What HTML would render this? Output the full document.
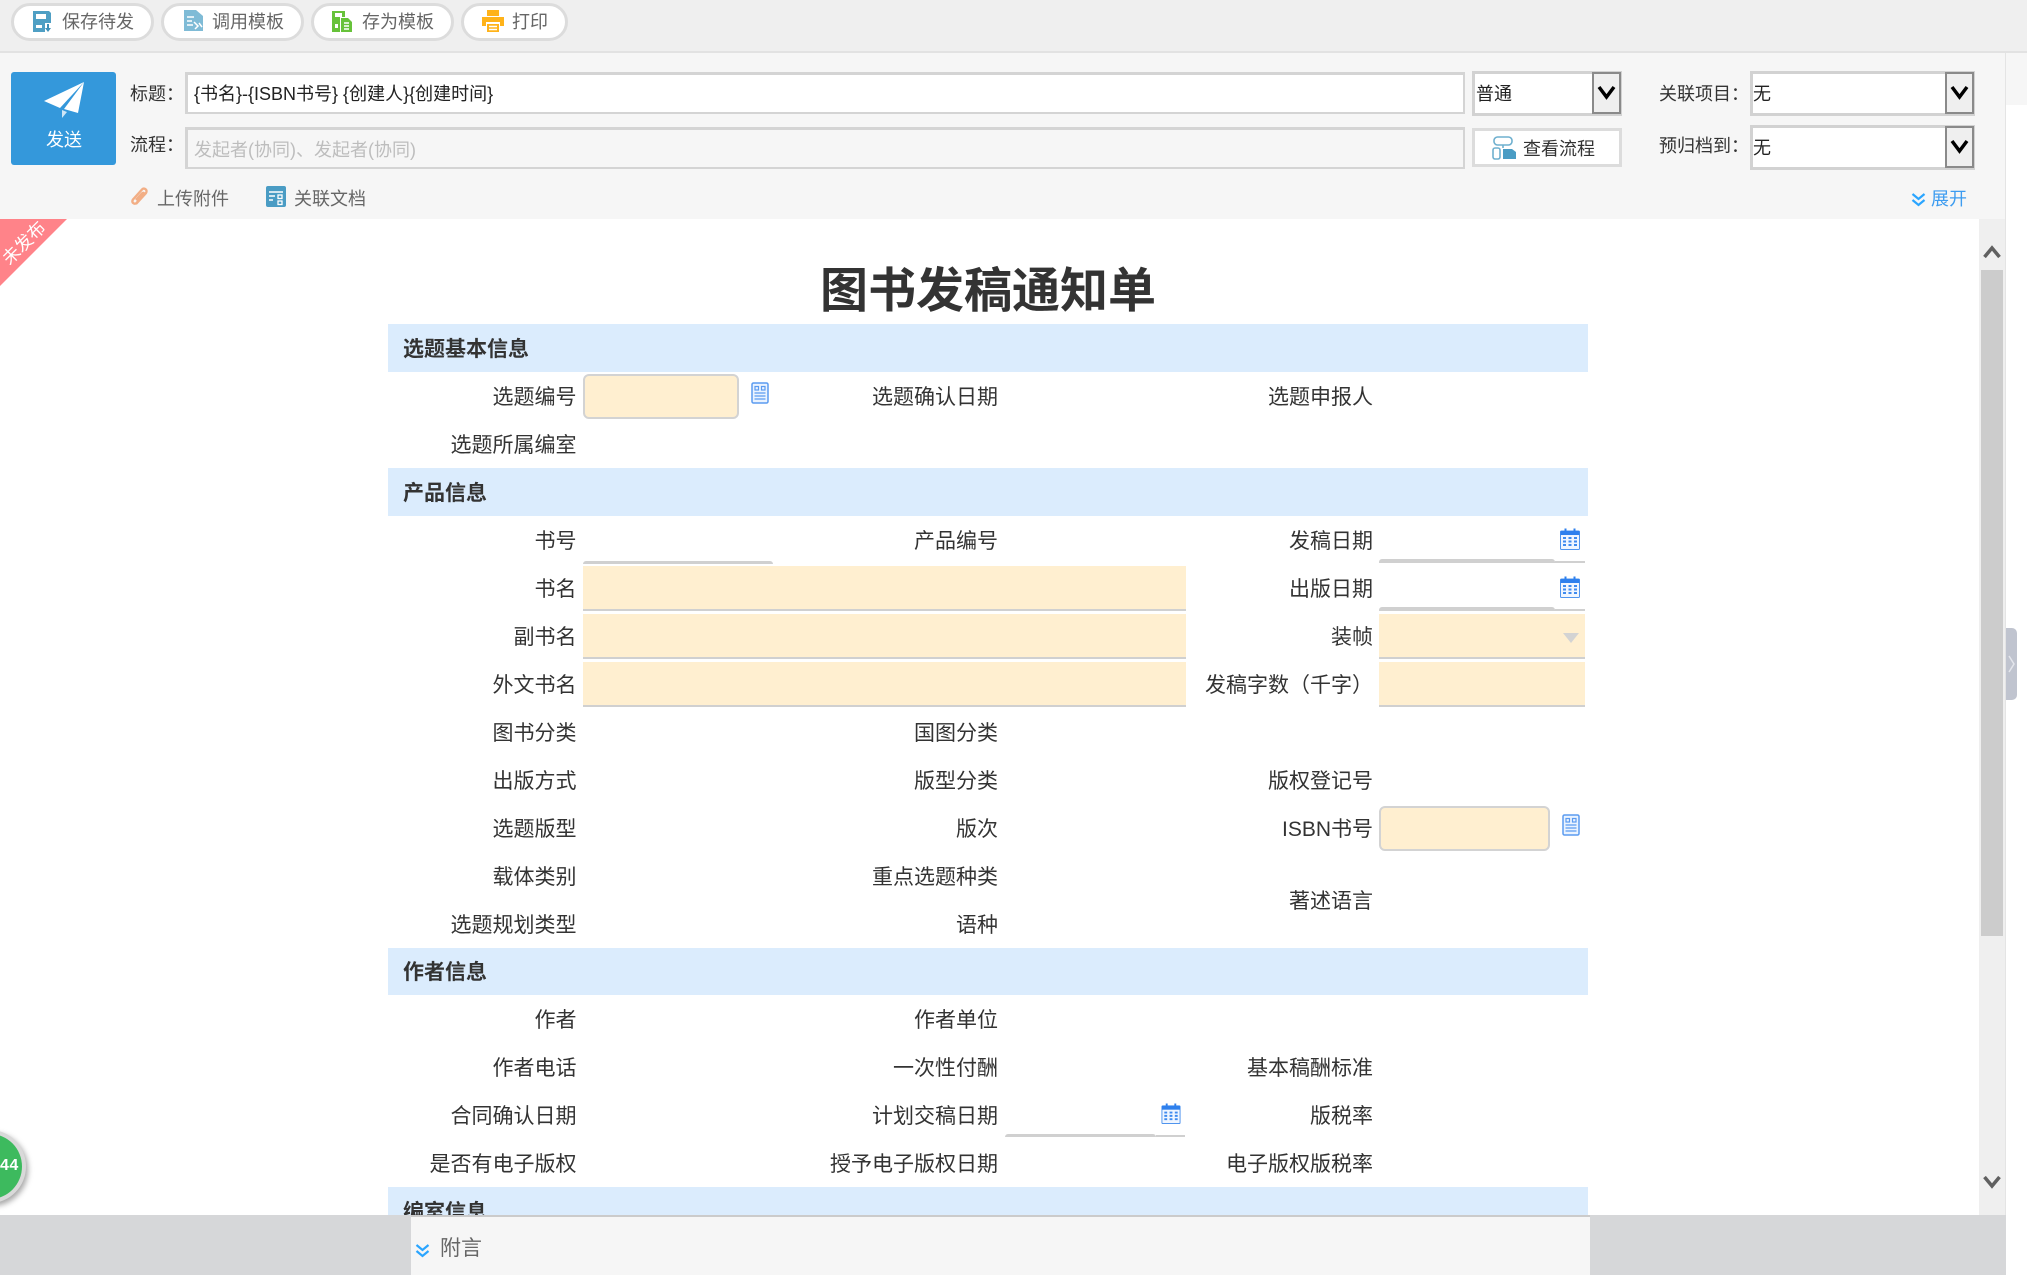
<!DOCTYPE html>
<html lang="zh-CN"><head><meta charset="utf-8"><title>图书发稿通知单</title>
<style>
html,body{margin:0;padding:0;width:2027px;height:1280px;overflow:hidden;background:#fff}
body{position:relative;font-family:"Liberation Sans","Noto Sans CJK SC",sans-serif;color:#333}
div,span,svg{position:absolute;box-sizing:border-box}
.tb{top:3px;height:38px;background:#fff;border:3px solid #dcdcdc;border-radius:19px}
.tt{top:8px;font-size:18px;line-height:28px;color:#666;white-space:nowrap}
.h{font-size:18px;line-height:24px;color:#333;white-space:nowrap}
.inp{background:#fff;border:2px solid #d4d4d4;border-top-width:3px;border-left-width:3px}
.sel{background:#fff;border:3px solid #d2d2d2}
.arr{top:-2px;bottom:-1px;right:-2px;width:29px;background:#efefef;border:2px solid #8a8a8a}
.l{height:48px;line-height:52px;font-size:21px;color:#333;white-space:nowrap;text-align:right}
.c1{right:1450.500px}.c2{right:1029px}.c3{right:654px}
.sec{left:388px;width:1200px;height:48px;background:#dbecfd;font-size:21px;font-weight:bold;line-height:52px;padding-left:15px;color:#333;overflow:hidden}
.fld{background:#ffefd0;border-bottom:2px solid #d0d0d0}
.rnd{background:#ffefd0;border:2px solid #d3d3d3;border-radius:6px}
.ul1{height:3px;background:#d0d0d0;border-radius:3px 3px 0 0}
.ul2{height:2px;background:#d0d0d0}
</style></head><body>

<!-- toolbar -->
<div style="left:0;top:0;width:2027px;height:51px;background:#efefef"></div>
<div style="left:0;top:51px;width:2027px;height:2px;background:#e2e2e2"></div>
<div class="tb" style="left:11px;width:143px"></div>
<div class="tb" style="left:161px;width:143px"></div>
<div class="tb" style="left:311px;width:143px"></div>
<div class="tb" style="left:461px;width:107px"></div>

<svg style="left:33px;top:11px" width="18" height="21" viewBox="0 0 18 21"><path d="M0 0H16L18 2V12H12V21H0Z" fill="#4f9fc4"/><rect x="3" y="3" width="10" height="5" fill="#fff"/><rect x="3" y="14" width="6" height="3" fill="#fff"/><path d="M14 13V17H12L15 21L18 17H16V13Z" fill="#3e8fb8"/></svg>
<span class="tt" style="left:62px">保存待发</span>
<svg style="left:184px;top:10px" width="19" height="21" viewBox="0 0 19 21"><path d="M0 0H12L19 6V21H0Z" fill="#7fbbd6"/><path d="M3 7H10M3 11H8M3 15H9" stroke="#fff" stroke-width="1.6"/><path d="M10 12L14 16L11 19M15 13L18 17" stroke="#fff" stroke-width="1.5" fill="none"/></svg>
<span class="tt" style="left:212px">调用模板</span>
<svg style="left:332px;top:10px" width="20" height="22" viewBox="0 0 20 22"><path d="M0 1H13V7H8V22H0Z" fill="#67c23a"/><rect x="3" y="3" width="7" height="4" fill="#fff"/><rect x="3" y="14" width="3" height="4" fill="#fff"/><path d="M9 8H16L20 12V22H9Z" fill="#67c23a"/><path d="M12 13H17M12 16H17M12 19H17" stroke="#fff" stroke-width="1.4"/></svg>
<span class="tt" style="left:362px">存为模板</span>
<svg style="left:482px;top:10px" width="22" height="22" viewBox="0 0 22 22"><rect x="5" y="0" width="12" height="6" fill="#ffb31a"/><path d="M0 7H22V16H18V12H4V16H0Z" fill="#ffb31a"/><path d="M5 14H17V22H5Z" fill="#ffb31a"/><path d="M7 16.500H15M7 19.500H15" stroke="#fff" stroke-width="1.5"/></svg>
<span class="tt" style="left:512px">打印</span>

<!-- header -->
<div style="left:0;top:53px;width:2005px;height:166px;background:#f6f6f6"></div>
<div style="left:2006px;top:53px;width:21px;height:52px;background:#f6f6f6"></div>
<div style="left:2005px;top:53px;width:1px;height:1162px;background:#e4e4e4"></div>

<div style="left:11px;top:72px;width:105px;height:93px;background:#3498db;border-radius:3px"></div>
<svg style="left:44px;top:82px" width="40" height="36" viewBox="0 0 40 36"><path d="M40 0L0 19L16 26Z" fill="#fff"/><path d="M40 0L20 27L34 31Z" fill="#fff"/><path d="M18 28L23 30L18 36Z" fill="#cfe6f6"/></svg>
<span style="left:46px;top:128px;font-size:18px;line-height:24px;color:#fff">发送</span>

<span class="h" style="left:130px;top:82px">标题：</span>
<span class="h" style="left:130px;top:133px">流程：</span>
<div class="inp" style="left:185px;top:72px;width:1280px;height:42px"></div>
<span style="left:194px;top:82px;font-size:18px;line-height:24px;color:#222;white-space:nowrap">{书名}-{ISBN书号} {创建人}{创建时间}</span>
<div class="inp" style="left:185px;top:127px;width:1280px;height:42px;background:#f6f6f6"></div>
<span style="left:194px;top:138px;font-size:18px;line-height:24px;color:#bdbdbd;white-space:nowrap">发起者(协同)、发起者(协同)</span>

<div class="sel" style="left:1472px;top:71px;width:150px;height:45px"><div class="arr"><svg style="left:3px;top:9px" width="19" height="18" viewBox="0 0 19 18"><path d="M2 4L9.500 14L17 4" fill="none" stroke="#000" stroke-width="3.500"/></svg></div></div>
<span style="left:1476px;top:82px;font-size:18px;line-height:24px;color:#222">普通</span>
<div style="left:1472px;top:128px;width:150px;height:39px;background:#fff;border:3px solid #dcdcdc"></div>
<svg style="left:1492px;top:136px" width="24" height="24" viewBox="0 0 24 24"><rect x="2" y="1" width="18" height="8" rx="3.500" fill="none" stroke="#6fb0cf" stroke-width="1.600"/><path d="M11 9V12" stroke="#6fb0cf" stroke-width="1.600"/><rect x="1" y="12" width="7" height="11" rx="2" fill="none" stroke="#6fb0cf" stroke-width="1.600"/><path d="M11 13H20L24 16V23H11Z" fill="#4a9cc4"/></svg>
<span style="left:1523px;top:137px;font-size:18px;line-height:24px;color:#333">查看流程</span>

<span class="h" style="left:1659px;top:82px">关联项目：</span>
<span class="h" style="left:1659px;top:134px">预归档到：</span>
<div class="sel" style="left:1750px;top:71px;width:225px;height:45px"><div class="arr"><svg style="left:3px;top:9px" width="19" height="18" viewBox="0 0 19 18"><path d="M2 4L9.500 14L17 4" fill="none" stroke="#000" stroke-width="3.500"/></svg></div></div>
<span style="left:1753px;top:82px;font-size:18px;line-height:24px;color:#222">无</span>
<div class="sel" style="left:1750px;top:125px;width:225px;height:45px"><div class="arr"><svg style="left:3px;top:9px" width="19" height="18" viewBox="0 0 19 18"><path d="M2 4L9.500 14L17 4" fill="none" stroke="#000" stroke-width="3.500"/></svg></div></div>
<span style="left:1753px;top:136px;font-size:18px;line-height:24px;color:#222">无</span>

<svg style="left:130px;top:187px" width="20" height="20" viewBox="0 0 20 20"><path d="M6 17L16 6C18 3 14 0 12 2.500L3 12.500C1 15 4 18 6.500 16L14 8C15 6.500 13.500 5 12 6.500L6 13" fill="none" stroke="#f2ae85" stroke-width="2.400"/></svg>
<span class="h" style="left:157px;top:187px;color:#666">上传附件</span>
<svg style="left:266px;top:186px" width="20" height="21" viewBox="0 0 20 21"><rect x="0" y="0" width="20" height="21" rx="2" fill="#4a9cc4"/><path d="M3 6H17M3 10H9M3 14H7" stroke="#fff" stroke-width="1.600"/><rect x="12" y="9" width="4" height="3.500" fill="none" stroke="#fff" stroke-width="1.300"/><rect x="12" y="15" width="4" height="3.500" fill="none" stroke="#fff" stroke-width="1.300"/></svg>
<span class="h" style="left:294px;top:187px;color:#666">关联文档</span>
<svg style="left:1911px;top:192px" width="15" height="15" viewBox="0 0 15 15"><path d="M1.500 2L7.500 7L13.500 2M1.500 8L7.500 13L13.500 8" fill="none" stroke="#2aa5ff" stroke-width="2.200"/></svg>
<span style="left:1931px;top:187px;font-size:18px;line-height:24px;color:#3d9cf0">展开</span>

<!-- ribbon -->
<svg style="left:0;top:219px" width="68" height="68" viewBox="0 0 68 68"><path d="M0 0H67L0 67Z" fill="#ff8389"/></svg>
<span style="left:-6px;top:231px;width:60px;text-align:center;font-size:17.500px;line-height:24px;color:#fff;transform:rotate(-45deg)">未发布</span>

<!-- scrollbar -->
<div style="left:1979px;top:219px;width:26px;height:996px;background:#efefef"></div>
<div style="left:1981px;top:270px;width:22px;height:666px;background:#ccc"></div>
<svg style="left:1983px;top:244px" width="18" height="16" viewBox="0 0 18 16"><path d="M1.500 13L9 4L16.500 13" fill="none" stroke="#606060" stroke-width="3.500"/></svg>
<svg style="left:1983px;top:1174px" width="18" height="16" viewBox="0 0 18 16"><path d="M1.500 3L9 12L16.500 3" fill="none" stroke="#606060" stroke-width="3.500"/></svg>
<div style="left:2006px;top:628px;width:11px;height:72px;background:#c0c4cf;border-radius:0 5px 5px 0"></div>
<svg style="left:2006px;top:654px" width="11" height="20" viewBox="0 0 11 20"><path d="M3 2L8 10L3 18" fill="none" stroke="#e4e6ec" stroke-width="1.500"/></svg>

<!-- title -->
<div style="left:388px;top:261px;width:1200px;height:62px;line-height:62px;text-align:center;font-size:48px;font-weight:bold;color:#333">图书发稿通知单</div>

<!-- section 1 -->
<div class="sec" style="top:324px">选题基本信息</div>
<div class="l c1" style="top:372px">选题编号</div>
<div class="rnd" style="left:583px;top:374px;width:156px;height:45px"></div>
<svg style="left:751px;top:382px" width="18" height="22" viewBox="0 0 18 22"><rect x="1" y="1" width="16" height="20" rx="1.500" fill="#eaf3ff" stroke="#5b9bf0" stroke-width="1.500"/><rect x="4" y="4.500" width="3.500" height="3.500" fill="none" stroke="#5b9bf0" stroke-width="1.200"/><rect x="10.500" y="4.500" width="3.500" height="3.500" fill="none" stroke="#5b9bf0" stroke-width="1.200"/><path d="M3.500 11H14.500M3.500 14H14.500M3.500 17H14.500" stroke="#5b9bf0" stroke-width="1.200"/></svg>
<div class="l c2" style="top:372px">选题确认日期</div>
<div class="l c3" style="top:372px">选题申报人</div>
<div class="l c1" style="top:420px">选题所属编室</div>

<!-- section 2 -->
<div class="sec" style="top:468px">产品信息</div>
<div class="l c1" style="top:516px">书号</div>
<div class="ul1" style="left:583px;top:561px;width:190px"></div>
<div class="l c2" style="top:516px">产品编号</div>
<div class="l c3" style="top:516px">发稿日期</div>
<div class="ul1" style="left:1379px;top:559px;width:176px;height:4px"></div>
<div class="ul2" style="left:1555px;top:561px;width:30px"></div>
<svg style="left:1560px;top:528px" width="20" height="22" viewBox="0 0 20 22"><rect x="0.500" y="3" width="19" height="18.500" rx="1" fill="#f0f6ff" stroke="#4f94ee"/><rect x="0.500" y="3" width="19" height="4" fill="#2f80ed"/><path d="M5.500 0.500V5M14.500 0.500V5" stroke="#2f80ed" stroke-width="2"/><path d="M3 10H17M3 13.500H17M3 17H17" stroke="#3f8bef" stroke-width="2" stroke-dasharray="3 2.500"/></svg>

<div class="l c1" style="top:564px">书名</div>
<div class="fld" style="left:583px;top:566px;width:603px;height:45px"></div>
<div class="l c3" style="top:564px">出版日期</div>
<div class="ul1" style="left:1379px;top:607px;width:176px;height:4px"></div>
<div class="ul2" style="left:1555px;top:609px;width:30px"></div>
<svg style="left:1560px;top:576px" width="20" height="22" viewBox="0 0 20 22"><rect x="0.500" y="3" width="19" height="18.500" rx="1" fill="#f0f6ff" stroke="#4f94ee"/><rect x="0.500" y="3" width="19" height="4" fill="#2f80ed"/><path d="M5.500 0.500V5M14.500 0.500V5" stroke="#2f80ed" stroke-width="2"/><path d="M3 10H17M3 13.500H17M3 17H17" stroke="#3f8bef" stroke-width="2" stroke-dasharray="3 2.500"/></svg>

<div class="l c1" style="top:612px">副书名</div>
<div class="fld" style="left:583px;top:614px;width:603px;height:45px"></div>
<div class="l c3" style="top:612px">装帧</div>
<div class="fld" style="left:1379px;top:614px;width:206px;height:45px"></div>
<svg style="left:1563px;top:633px" width="16" height="10" viewBox="0 0 16 10"><path d="M0 0H16L8 10Z" fill="#d3d3d3"/></svg>

<div class="l c1" style="top:660px">外文书名</div>
<div class="fld" style="left:583px;top:662px;width:603px;height:45px"></div>
<div class="l c3" style="top:660px">发稿字数（千字）</div>
<div class="fld" style="left:1379px;top:662px;width:206px;height:45px"></div>

<div class="l c1" style="top:708px">图书分类</div>
<div class="l c2" style="top:708px">国图分类</div>
<div class="l c1" style="top:756px">出版方式</div>
<div class="l c2" style="top:756px">版型分类</div>
<div class="l c3" style="top:756px">版权登记号</div>
<div class="l c1" style="top:804px">选题版型</div>
<div class="l c2" style="top:804px">版次</div>
<div class="l c3" style="top:804px">ISBN书号</div>
<div class="rnd" style="left:1379px;top:806px;width:171px;height:45px"></div>
<svg style="left:1562px;top:814px" width="18" height="22" viewBox="0 0 18 22"><rect x="1" y="1" width="16" height="20" rx="1.500" fill="#eaf3ff" stroke="#5b9bf0" stroke-width="1.500"/><rect x="4" y="4.500" width="3.500" height="3.500" fill="none" stroke="#5b9bf0" stroke-width="1.200"/><rect x="10.500" y="4.500" width="3.500" height="3.500" fill="none" stroke="#5b9bf0" stroke-width="1.200"/><path d="M3.500 11H14.500M3.500 14H14.500M3.500 17H14.500" stroke="#5b9bf0" stroke-width="1.200"/></svg>
<div class="l c1" style="top:852px">载体类别</div>
<div class="l c2" style="top:852px">重点选题种类</div>
<div class="l c3" style="top:876px">著述语言</div>
<div class="l c1" style="top:900px">选题规划类型</div>
<div class="l c2" style="top:900px">语种</div>

<!-- section 3 -->
<div class="sec" style="top:948px;height:47px;line-height:50px">作者信息</div>
<div class="l c1" style="top:995px">作者</div>
<div class="l c2" style="top:995px">作者单位</div>
<div class="l c1" style="top:1043px">作者电话</div>
<div class="l c2" style="top:1043px">一次性付酬</div>
<div class="l c3" style="top:1043px">基本稿酬标准</div>
<div class="l c1" style="top:1091px">合同确认日期</div>
<div class="l c2" style="top:1091px">计划交稿日期</div>
<div class="ul1" style="left:1005px;top:1134px;width:151px;height:3px"></div>
<div class="ul2" style="left:1156px;top:1135px;width:29px"></div>
<svg style="left:1161px;top:1103px" width="20" height="21" viewBox="0 0 20 22"><rect x="0.500" y="3" width="19" height="18.500" rx="1" fill="#f0f6ff" stroke="#4f94ee"/><rect x="0.500" y="3" width="19" height="4" fill="#2f80ed"/><path d="M5.500 0.500V5M14.500 0.500V5" stroke="#2f80ed" stroke-width="2"/><path d="M3 10H17M3 13.500H17M3 17H17" stroke="#3f8bef" stroke-width="2" stroke-dasharray="3 2.500"/></svg>
<div class="l c3" style="top:1091px">版税率</div>
<div class="l c1" style="top:1139px">是否有电子版权</div>
<div class="l c2" style="top:1139px">授予电子版权日期</div>
<div class="l c3" style="top:1139px">电子版权版税率</div>

<!-- section 4 -->
<div class="sec" style="top:1187px">编室信息</div>

<!-- badge -->
<div style="left:-46px;top:1130px;width:72px;height:73px;border-radius:50%;background:#3dba5e;border:4px solid #d9d9d9;box-shadow:2px 3px 6px rgba(0,0,0,.35)"></div>
<span style="left:0;top:1156px;font-size:16px;line-height:20px;font-weight:bold;color:#fff;letter-spacing:.5px">44</span>

<!-- bottom -->
<div style="left:0;top:1215px;width:2006px;height:60px;background:#d6d7d9"></div>
<div style="left:411px;top:1215px;width:1179px;height:2px;background:#cbcbcb"></div>
<div style="left:411px;top:1217px;width:1179px;height:58px;background:#f6f6f6"></div>
<svg style="left:415px;top:1243px" width="15" height="15" viewBox="0 0 15 15"><path d="M1.500 2L7.500 7L13.500 2M1.500 8L7.500 13L13.500 8" fill="none" stroke="#2aa5ff" stroke-width="2.200"/></svg>
<span style="left:440px;top:1236px;font-size:21px;line-height:26px;color:#666">附言</span>
</body></html>
